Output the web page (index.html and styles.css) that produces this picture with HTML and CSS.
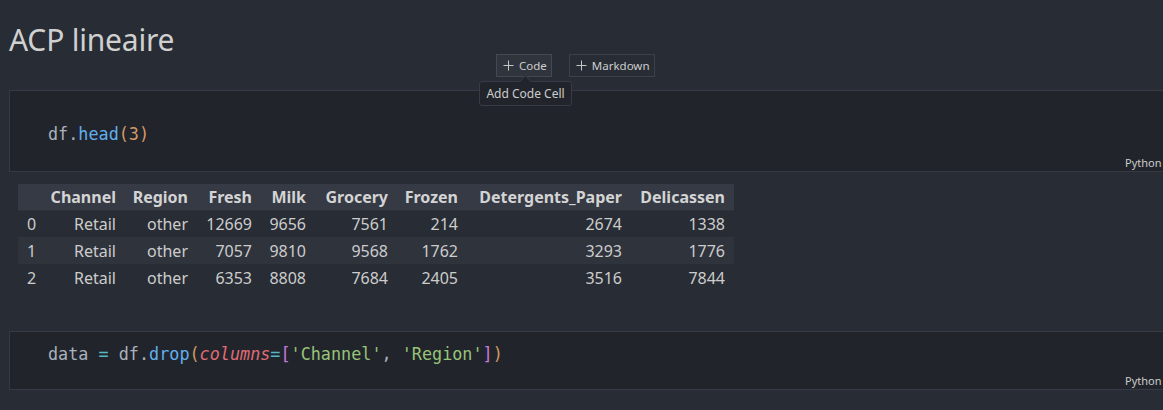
FILE: index.html
```html
<!DOCTYPE html>
<html>
<head>
<meta charset="utf-8">
<link rel="stylesheet" href="styles.css">
</head>
<body>
<div class="page">
  <h1 class="title">ACP lineaire</h1>
  <div class="toolbar">
    <div class="btn btn-hover">
      <svg class="plus" viewBox="0 0 12 12" width="11" height="11"><path d="M6 0.5v11M0.5 6h11" stroke="#c5c5c5" stroke-width="1.1" fill="none"/></svg>
      <span>Code</span>
      <div class="tooltip">Add Code Cell</div>
    </div>
    <div class="btn">
      <svg class="plus" viewBox="0 0 12 12" width="11" height="11"><path d="M6 0.5v11M0.5 6h11" stroke="#c5c5c5" stroke-width="1.1" fill="none"/></svg>
      <span>Markdown</span>
    </div>
  </div>

  <div class="cell cell-1">
    <div class="editor"><span class="v">df</span><span class="p">.</span><span class="f">head</span><span class="o">(</span><span class="n">3</span><span class="o">)</span></div>
    <div class="status">Python</div>
  </div>

  <table class="df">
    <colgroup>
      <col class="c-idx"><col class="c-ch"><col class="c-rg"><col class="c-fr"><col class="c-mk"><col class="c-gr"><col class="c-fz"><col class="c-dp"><col class="c-de">
    </colgroup>
    <thead>
      <tr><th></th><th>Channel</th><th>Region</th><th>Fresh</th><th>Milk</th><th>Grocery</th><th>Frozen</th><th>Detergents_Paper</th><th>Delicassen</th></tr>
    </thead>
    <tbody>
      <tr><td class="idx">0</td><td>Retail</td><td>other</td><td>12669</td><td>9656</td><td>7561</td><td>214</td><td>2674</td><td>1338</td></tr>
      <tr class="alt"><td class="idx">1</td><td>Retail</td><td>other</td><td>7057</td><td>9810</td><td>9568</td><td>1762</td><td>3293</td><td>1776</td></tr>
      <tr><td class="idx">2</td><td>Retail</td><td>other</td><td>6353</td><td>8808</td><td>7684</td><td>2405</td><td>3516</td><td>7844</td></tr>
    </tbody>
  </table>

  <div class="cell cell-2">
    <div class="editor"><span class="v">data</span> <span class="op">=</span> <span class="v">df</span><span class="p">.</span><span class="f">drop</span><span class="o">(</span><span class="kw">columns</span><span class="op">=</span><span class="br">[</span><span class="s">'Channel'</span><span class="p">,</span> <span class="s">'Region'</span><span class="br">]</span><span class="o">)</span></div>
    <div class="status">Python</div>
  </div>
</div>
</body>
</html>
```

FILE: styles.css
```css
html, body {
  margin: 0;
  padding: 0;
  background: #282c34;
  overflow: hidden;
}
body {
  width: 1163px;
  height: 410px;
  font-family: "Noto Sans", "Open Sans", sans-serif;
  color: #cccccc;
}
.page {
  padding-left: 9px;
  width: 1180px;
}
.title {
  margin: 0;
  padding-top: 20px;
  font-size: 30px;
  font-weight: 400;
  line-height: 40px;
  height: 34px;
  color: #d0d0d0;
  letter-spacing: -0.2px;
}
.toolbar {
  display: flex;
  gap: 17px;
  padding-left: 487px;
  height: 23px;
}
.btn {
  position: relative;
  display: flex;
  align-items: center;
  gap: 5px;
  height: 21px;
  padding: 0 4px 0 6px;
  border: 1px solid #3b404a;
  font-size: 11.5px;
  color: #cccccc;
  box-sizing: content-box;
}
.btn-hover {
  background: #30343d;
  border-color: #434853;
}
.plus {
  display: block;
}
.tooltip {
  position: absolute;
  top: 26px;
  left: -18px;
  width: 93px;
  height: 25px;
  box-sizing: border-box;
  background: #21252b;
  border: 1px solid #363b45;
  border-radius: 3px;
  font-size: 12px;
  line-height: 23px;
  text-align: center;
  color: #cccccc;
  white-space: nowrap;
  z-index: 2;
}
.tooltip::before {
  content: "";
  position: absolute;
  top: -5px;
  left: 41px;
  width: 8px;
  height: 8px;
  background: #21252b;
  border-left: 1px solid #363b45;
  border-top: 1px solid #363b45;
  transform: rotate(45deg);
}
.cell {
  background: #21252b;
  border: 1px solid #353a44;
  box-sizing: border-box;
}
.cell-1 {
  margin-top: 13px;
  height: 82px;
}
.cell-2 {
  margin-top: 40px;
  height: 59px;
}
.editor {
  font-family: "DejaVu Sans Mono", "Liberation Mono", monospace;
  font-size: 16.8px;
  line-height: 22px;
  height: 22px;
  padding-left: 38px;
  color: #abb2bf;
  white-space: pre;
}
.cell-1 .editor { padding-top: 32px; }
.cell-2 .editor { padding-top: 11px; }
.status {
  font-size: 11px;
  line-height: 14px;
  height: 14px;
  padding-left: 1115px;
  color: #cccccc;
}
.cell-1 .status { margin-top: 11px; }
.cell-2 .status { margin-top: 9px; }
.v { color: #a9b1bd; }
.p { color: #a9b1bd; }
.f { color: #61afef; }
.o { color: #d19a66; }
.n { color: #d19a66; }
.op { color: #56b6c2; }
.kw { color: #e06c75; font-style: italic; }
.br { color: #c678dd; }
.s { color: #98c379; }

.df {
  margin-top: 12px;
  margin-left: 9px;
  border-collapse: collapse;
  table-layout: fixed;
  width: 716px;
  font-size: 16px;
  color: #cccccc;
}
.c-idx { width: 24px; }
.c-ch { width: 83px; }
.c-rg { width: 72px; }
.c-fr { width: 64px; }
.c-mk { width: 54px; }
.c-gr { width: 82px; }
.c-fz { width: 70px; }
.c-dp { width: 164px; }
.c-de { width: 103px; }
.df thead tr {
  background: #363a44;
  height: 26px;
  border-bottom: 1px solid #2e323a;
}
.df th {
  font-weight: 700;
  text-align: right;
  padding: 0 9px 0 0;
  color: #d4d4d4;
  white-space: nowrap;
  line-height: 20px;
}
.df tbody tr {
  height: 27px;
}
.df tbody tr.alt {
  background: #2f333c;
}
.df td {
  text-align: right;
  padding: 0 9px 0 0;
  white-space: nowrap;
  line-height: 20px;
}
.df td.idx {
  text-align: left;
  padding: 0 0 0 9px;
}
```
